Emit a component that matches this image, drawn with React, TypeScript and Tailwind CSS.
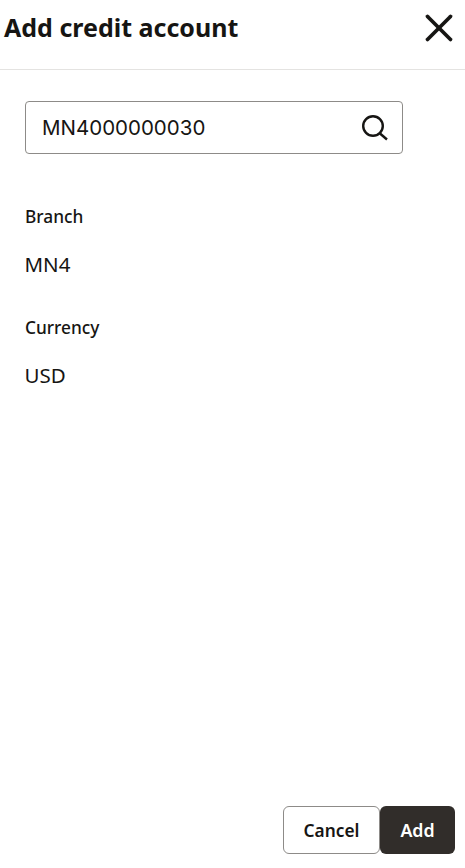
import { X } from 'lucide-react';

function Field({ label, value }: { label: string; value: string }) {
    return (
        <div className="flex flex-col">
            <span className="text-[17.3px] leading-[24px] font-medium text-[#161513]">{label}</span>
            <span className="mt-[23px] -ml-[0.5px] text-[20.5px] leading-[24px] text-[#161513]">{value}</span>
        </div>
    );
}

export default function App() {
    return (
        <div className="h-[868px] w-[465px] flex flex-col bg-white font-['Noto_Sans',sans-serif] text-[#161513]">
            <header className="h-[70px] shrink-0 flex items-center justify-between pl-[4px] pr-[3px] pb-[14px] border-b border-[#e4e3e1]">
                <h1 className="text-[25px] leading-[32px] font-bold -mt-[1px]">Add credit account</h1>
                <X size={46} strokeWidth={1.95} />
            </header>

            <main className="flex-1 flex flex-col pt-[31px] pl-[25px]">
                <div className="h-[53px] w-[378px] flex items-center justify-between pl-[16px] pr-[14px] rounded-[4px] border border-[#8d8b88]">
                    <span className="text-[20.5px] font-['Inter',sans-serif] leading-[24px]">MN4000000030</span>
                    <svg width="28" height="28" viewBox="0 0 28 28" fill="none" stroke="#161513" strokeWidth="2.4">
                        <circle cx="13" cy="12" r="9.8" />
                        <path d="M20 19.5 L27 25.5" />
                    </svg>
                </div>

                <div className="mt-[51px] flex flex-col gap-[40px]">
                    <Field label="Branch" value="MN4" />
                    <Field label="Currency" value="USD" />
                </div>
            </main>

            <footer className="flex justify-end pr-[10px] pb-[14px]">
                <button className="h-[48px] w-[97px] pt-[1px] rounded-[6px] border border-[#8d8b88] bg-white text-[17.3px] font-semibold text-[#161513]">
                    Cancel
                </button>
                <button className="h-[48px] w-[75px] pt-[1px] rounded-[6px] bg-[#312d2a] text-[17.8px] font-semibold text-white">
                    Add
                </button>
            </footer>
        </div>
    );
}
